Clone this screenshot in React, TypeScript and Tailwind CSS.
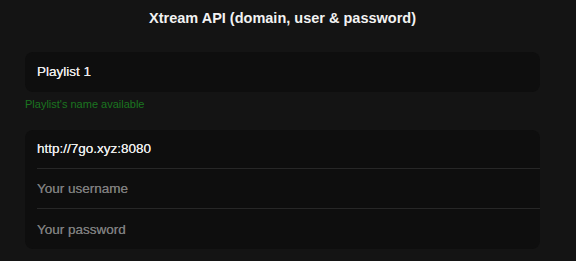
export default function App() {
  return (
    <div className="min-h-[261px] w-full bg-[#141414] pl-[25px] pr-[36px] pt-[7px] font-['Liberation_Sans',Arial,sans-serif]">
      <h1 className="text-center text-[14.5px] font-bold leading-[22px] text-[#f2f2f2]">
        Xtream API (domain, user &amp; password)
      </h1>

      <div className="mt-[23px] flex h-[40px] items-center rounded-lg bg-[#0e0e0e] px-3">
        <span className="text-[13.5px] text-[#ececec] [text-shadow:0_0_0.4px_#ececec]">Playlist 1</span>
      </div>
      <p className="mt-[5px] text-[11px] leading-[14px] text-[#1b7520]">Playlist&apos;s name available</p>

      <div className="mt-[19px] flex flex-col rounded-lg bg-[#0e0e0e] pl-3">
        <div className="flex h-[39px] items-center border-b border-[#272727]">
          <span className="text-[13.5px] text-[#ececec] [text-shadow:0_0_0.4px_#ececec]">http://7go.xyz:8080</span>
        </div>
        <div className="flex h-[40px] items-center border-b border-[#272727] pt-[2px]">
          <span className="text-[13.5px] text-[#7d7d7d] [text-shadow:0_0_0.4px_#7d7d7d]">Your username</span>
        </div>
        <div className="flex h-[40px] items-center pt-[2px]">
          <span className="text-[13.5px] text-[#7d7d7d] [text-shadow:0_0_0.4px_#7d7d7d]">Your password</span>
        </div>
      </div>
    </div>
  );
}
